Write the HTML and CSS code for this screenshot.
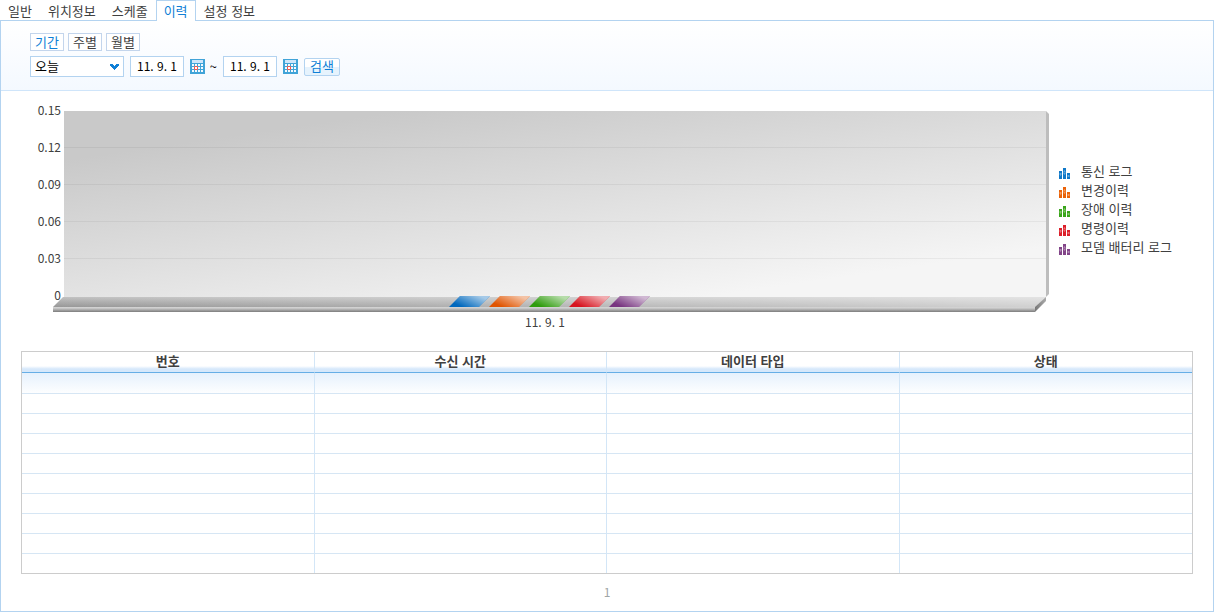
FILE: index.html
```html
<!DOCTYPE html>
<html lang="ko">
<head>
<meta charset="utf-8">
<meta name="viewport" content="width=device-width, initial-scale=1">
<title>이력</title>
<link rel="stylesheet" href="styles.css">
</head>
<body>
<svg class="defs" width="0" height="0" aria-hidden="true">
  <defs>
    <symbol id="calendar" viewBox="0 0 15 15">
      <rect width="15" height="15" fill="#41a4d8"/>
      <rect x="2" y="1" width="11" height="3" fill="#cfe6fa"/>
      <path d="M2 5h2v2H2zM5 5h2v2H5zM8 5h2v2H8zM11 5h2v2h-2zM2 8h2v2H2zM5 8h2v2H5zM8 8h2v2H8zM11 8h2v2h-2zM2 11h2v2H2zM5 11h2v2H5zM8 11h2v2H8zM11 11h2v2h-2z" fill="#f4faff"/>
      <path d="M4.500 7.500h3v3h-3z" fill="#fff" stroke="#f0574f"/>
    </symbol>
    <symbol id="bars" viewBox="0 0 11 11">
      <path d="M0 3h3v8H0zM4 0h3v11H4zM8 5h3v6H8z" fill="currentColor"/>
      <path d="M1 5h1v3H1zM5 2h1v2H5zM5 5h1v2H5zM9 7h1v2H9z" fill="#fff" opacity=".25"/>
      <path d="M0 5h3v2H0zM4 3h3v3H4zM8 7h3v2H8z" fill="#fff" opacity=".15"/>
    </symbol>
  </defs>
</svg>
<nav class="tabs" role="tablist">
  <button class="tab" role="tab">일반</button>
  <button class="tab" role="tab">위치정보</button>
  <button class="tab" role="tab">스케줄</button>
  <button class="tab tab-active" role="tab" aria-selected="true">이력</button>
  <button class="tab" role="tab">설정 정보</button>
</nav>
<main class="panel">
  <form class="filter">
    <div class="periods">
      <button type="button" class="period period-active">기간</button>
      <button type="button" class="period">주별</button>
      <button type="button" class="period">월별</button>
    </div>
    <div class="range">
      <span class="picker">
        <select class="select" aria-label="기간 선택"><option>오늘</option></select>
        <svg class="arrow" viewBox="0 0 9 6"><path d="M0 0h3v1h1v1h1V1h1V0h3v2H8v1H7v1H6v1H5v1H4V5H3V4H2V3H1V2H0z" fill="#0f7fd6"/></svg>
      </span>
      <input class="date" type="text" value="11. 9. 1" aria-label="시작일">
      <button type="button" class="calendar" aria-label="시작일 달력"><svg><use href="#calendar"/></svg></button>
      <span class="tilde">~</span>
      <input class="date" type="text" value="11. 9. 1" aria-label="종료일">
      <button type="button" class="calendar" aria-label="종료일 달력"><svg><use href="#calendar"/></svg></button>
      <button type="button" class="search">검색</button>
    </div>
  </form>
  <section class="chart">
    <div class="scale">
      <span>0.15</span><span>0.12</span><span>0.09</span><span>0.06</span><span>0.03</span><span>0</span>
    </div>
    <div class="plot">
      <svg class="stage" viewBox="0 0 996 201" preserveAspectRatio="none" aria-hidden="true">
        <defs>
          <linearGradient id="wall" gradientUnits="userSpaceOnUse" x1="347" y1="0" x2="380" y2="226">
            <stop offset="0" stop-color="#c9c9c9"/><stop offset="1" stop-color="#f5f5f5"/>
          </linearGradient>
          <linearGradient id="floor" x1="0" y1="0" x2="0" y2="1">
            <stop offset="0" stop-color="#c2c2c2"/><stop offset="1" stop-color="#989898"/>
          </linearGradient>
          <linearGradient id="shine" x1="0" y1="0" x2="1" y2="0">
            <stop offset="0" stop-color="#fff" stop-opacity="0"/><stop offset="1" stop-color="#fff" stop-opacity=".55"/>
          </linearGradient>
          <linearGradient id="front" x1="0" y1="0" x2="0" y2="1">
            <stop offset="0" stop-color="#d8d8d8"/><stop offset=".3" stop-color="#c4c4c4"/><stop offset="1" stop-color="#7c7c7c"/>
          </linearGradient>
          <linearGradient id="bevel" x1="0" y1="0" x2="1" y2="0">
            <stop offset="0" stop-color="#777"/><stop offset="1" stop-color="#aaa"/>
          </linearGradient>
          <linearGradient id="gloss" x1="0" y1=".8" x2="1" y2=".2">
            <stop offset=".15" stop-color="#fff" stop-opacity="0"/><stop offset=".9" stop-color="#fff" stop-opacity=".65"/>
          </linearGradient>
        </defs>
        <path d="M11 0H993V186H11z" fill="url(#wall)"/>
        <path d="M11 36.500H993M11 73.500H993M11 110.500H993M11 147.500H993" stroke="#000" stroke-opacity=".05"/>
        <path d="M993 0L996 3V183L993 186z" fill="#bdbdbd"/>
        <path d="M10 186H993L982 196H0z" fill="url(#floor)"/>
        <path d="M10 186H993L982 196H0z" fill="url(#shine)"/>
        <path d="M0 196H982V201H0z" fill="url(#front)"/>
        <path d="M993 186V190L982 201V196z" fill="url(#bevel)"/>
        <g>
          <path d="M407 185H437L426 196H396z" fill="#0068bd"/>
          <path d="M447 185H477L466 196H436z" fill="#e05400"/>
          <path d="M487 185H517L506 196H476z" fill="#2f9c0d"/>
          <path d="M527 185H557L546 196H516z" fill="#d7141f"/>
          <path d="M567 185H597L586 196H556z" fill="#783580"/>
        </g>
        <g fill="url(#gloss)">
          <path d="M407 185H437L426 196H396z"/>
          <path d="M447 185H477L466 196H436z"/>
          <path d="M487 185H517L506 196H476z"/>
          <path d="M527 185H557L546 196H516z"/>
          <path d="M567 185H597L586 196H556z"/>
        </g>
      </svg>
      <div class="category">11. 9. 1</div>
    </div>
    <ul class="legend">
      <li><svg class="key key-blue"><use href="#bars"/></svg>통신 로그</li>
      <li><svg class="key key-orange"><use href="#bars"/></svg>변경이력</li>
      <li><svg class="key key-green"><use href="#bars"/></svg>장애 이력</li>
      <li><svg class="key key-red"><use href="#bars"/></svg>명령이력</li>
      <li><svg class="key key-purple"><use href="#bars"/></svg>모뎀 배터리 로그</li>
    </ul>
  </section>
  <table class="log">
    <thead><tr><th>번호</th><th>수신 시간</th><th>데이터 타입</th><th>상태</th></tr></thead>
    <tbody>
      <tr><td></td><td></td><td></td><td></td></tr>
      <tr><td></td><td></td><td></td><td></td></tr>
      <tr><td></td><td></td><td></td><td></td></tr>
      <tr><td></td><td></td><td></td><td></td></tr>
      <tr><td></td><td></td><td></td><td></td></tr>
      <tr><td></td><td></td><td></td><td></td></tr>
      <tr><td></td><td></td><td></td><td></td></tr>
      <tr><td></td><td></td><td></td><td></td></tr>
      <tr><td></td><td></td><td></td><td></td></tr>
      <tr><td></td><td></td><td></td><td></td></tr>
    </tbody>
  </table>
  <div class="pager">1</div>
</main>
</body>
</html>
```

FILE: styles.css
```css
* { box-sizing: border-box; }

body {
  margin: 0;
  min-height: 100vh;
  display: flex;
  flex-direction: column;
  background: #fff;
  color: #404040;
  font: 13px/18px "Noto Sans CJK KR", sans-serif;
}

button, input, select {
  margin: 0;
  padding: 0;
  border: 0;
  border-radius: 0;
  background: none;
  color: inherit;
  font: inherit;
}

.defs { position: absolute; }

.tabs { display: flex; height: 20px; }
.tab { padding: 2px 8px 0; white-space: nowrap; }
.tab-active {
  position: relative;
  height: 21px;
  padding: 0 7px;
  border: 1px solid #b3d3f0;
  border-bottom: 0;
  background: #fff;
  color: #0f7fd6;
}

.panel {
  flex: 1;
  border: 1px solid #b3d3f0;
}

.filter {
  height: 70px;
  padding: 12px 29px 0;
  border-bottom: 1px solid #cfe5fa;
  background: linear-gradient(#fff, #f4f9ff);
}
.periods { display: flex; gap: 4px; }
.period {
  width: 34px;
  height: 18px;
  border: 1px solid #c3d5ec;
  background: #fff;
  line-height: 16px;
}
.period-active { color: #0f7fd6; }

.range { display: flex; align-items: center; gap: 6px; margin-top: 5px; color: #000; }
.picker { position: relative; display: flex; }
.select {
  width: 94px;
  height: 21px;
  padding: 0 4px 2px;
  border: 1px solid #b3d3f0;
  background: #fff;
  appearance: none;
}
.arrow { position: absolute; right: 5px; top: 8px; width: 9px; height: 6px; pointer-events: none; }
.date {
  width: 54px;
  height: 21px;
  padding-bottom: 2px;
  border: 1px solid #b3d3f0;
  background: #fff;
  font-size: 12px;
  text-align: center;
}
.calendar { width: 15px; height: 15px; }
.calendar svg { display: block; width: 15px; height: 15px; }
.tilde { display: flex; justify-content: flex-end; width: 6px; }
.search {
  width: 36px;
  height: 18px;
  padding-bottom: 2px;
  border: 1px solid #b3d3f0;
  border-radius: 2px;
  background: linear-gradient(#fff 50%, #e6f3fd 50%);
  color: #0f7fd6;
  line-height: 14px;
}

.chart { display: flex; height: 260px; }
.scale {
  display: flex;
  flex-direction: column;
  width: 60px;
  font-size: 12px;
  line-height: 37px;
  text-align: right;
}
.plot { flex: 1; min-width: 0; margin-left: -8px; padding-top: 20px; }
.stage { display: block; width: 100%; height: 201px; }
.category { padding-right: 12px; font-size: 12px; line-height: 20px; text-align: center; }
.legend {
  width: 164px;
  margin: 0;
  padding: 70px 0 0 10px;
  list-style: none;
  line-height: 19px;
}
.legend li { display: flex; align-items: center; gap: 11px; white-space: nowrap; }
.key { width: 11px; height: 11px; margin-top: 6px; }
.key-blue { color: #0f78c8; }
.key-orange { color: #ea6208; }
.key-green { color: #3aa51a; }
.key-red { color: #dc1f2a; }
.key-purple { color: #824488; }

.log {
  width: calc(100% - 40px);
  margin: 0 20px;
  border: 1px solid #ccc;
  border-collapse: separate;
  border-spacing: 0;
  table-layout: fixed;
}
.log th {
  height: 21px;
  padding: 0 0 2px;
  border-bottom: 1px solid #66aee6;
  background: linear-gradient(#fff 70%, #d6e8fb 85%);
  font-weight: 700;
  line-height: 16px;
}
.log td { height: 20px; padding: 0; border-bottom: 1px solid #d6e6f4; }
.log th:not(:last-child), .log td:not(:last-child) { border-right: 1px solid #d3e6f7; }
.log tbody tr:first-child td { height: 21px; background: linear-gradient(#e6f1fd, #fdfeff); }
.log tbody tr:last-child td { height: 19px; border-bottom: 0; }

.pager { padding-top: 9px; color: #a0a6a6; font-size: 12px; text-align: center; }
```
